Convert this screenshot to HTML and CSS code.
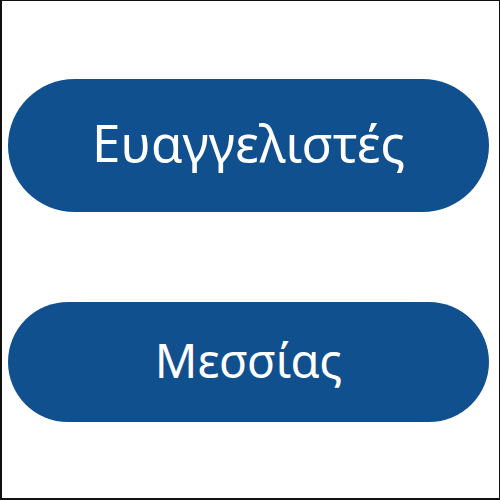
FILE: index.html
```html
<!DOCTYPE html>
<html lang="el">
<head>
<meta charset="utf-8">
<link rel="stylesheet" href="styles.css">
</head>
<body>
<div class="frame">
  <div class="pill pill-large">Ευαγγελιστές</div>
  <div class="pill pill-small">Μεσσίας</div>
</div>
</body>
</html>
```
FILE: styles.css
```css
html, body {
  margin: 0;
  padding: 0;
  background: #ffffff;
}
.frame {
  width: 500px;
  height: 500px;
  box-sizing: border-box;
  border: 1px solid #111;
  border-left-width: 2px;
  border-bottom-width: 2px;
  padding: 78px 10px 0 6px;
  display: flex;
  flex-direction: column;
  gap: 90px;
  font-family: "Noto Sans", "Open Sans", sans-serif;
}
.pill {
  background: #11508e;
  color: #ffffff;
  display: flex;
  align-items: center;
  justify-content: center;
  box-sizing: border-box;
}
.pill-large {
  height: 133px;
  border-radius: 67px;
  font-size: 51px;
  padding-bottom: 8px;
}
.pill-small {
  height: 120px;
  border-radius: 60px;
  font-size: 47px;
  padding-bottom: 4px;
}
```
